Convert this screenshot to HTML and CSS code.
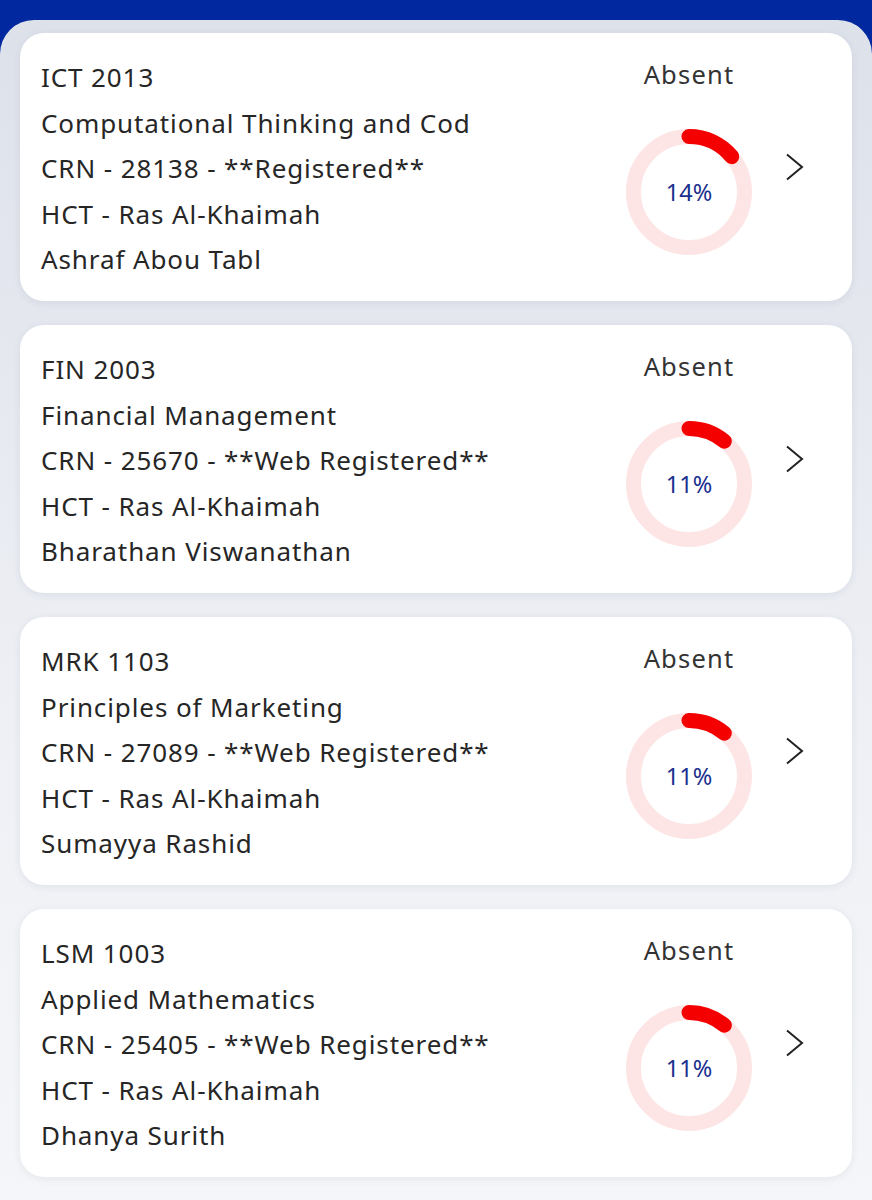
FILE: index.html
```html
<!DOCTYPE html>
<html lang="en">
<head>
    <meta charset="UTF-8">
    <meta name="viewport" content="width=device-width, initial-scale=1.0">
    <title>Attendance</title>
    <link rel="stylesheet" href="styles.css">
</head>
<body>
    <div id="wrap">
        <div class="card">
            <div class="info">
                <p>ICT 2013</p>
                <p>Computational Thinking and Cod</p>
                <p>CRN - 28138 - **Registered**</p>
                <p>HCT - Ras Al-Khaimah</p>
                <p>Ashraf Abou Tabl</p>
            </div>
            <div class="status">
                <div class="label">Absent</div>
                <div class="ring">
                    <svg viewBox="0 0 126 126" width="126" height="126">
                        <circle class="track" cx="63" cy="63" r="55.5"/>
                        <circle class="bar" cx="63" cy="63" r="55.5" pathLength="100" stroke-dasharray="14 100" transform="rotate(-90 63 63)"/>
                    </svg>
                    <span class="pct">14%</span>
                </div>
            </div>
            <svg class="arrow" viewBox="0 0 20 28" width="20" height="28"><path d="M3 1.5 L18 14 L3 26.5"/></svg>
        </div>

        <div class="card">
            <div class="info">
                <p>FIN 2003</p>
                <p>Financial Management</p>
                <p>CRN - 25670 - **Web Registered**</p>
                <p>HCT - Ras Al-Khaimah</p>
                <p>Bharathan Viswanathan</p>
            </div>
            <div class="status">
                <div class="label">Absent</div>
                <div class="ring">
                    <svg viewBox="0 0 126 126" width="126" height="126">
                        <circle class="track" cx="63" cy="63" r="55.5"/>
                        <circle class="bar" cx="63" cy="63" r="55.5" pathLength="100" stroke-dasharray="11 100" transform="rotate(-90 63 63)"/>
                    </svg>
                    <span class="pct">11%</span>
                </div>
            </div>
            <svg class="arrow" viewBox="0 0 20 28" width="20" height="28"><path d="M3 1.5 L18 14 L3 26.5"/></svg>
        </div>

        <div class="card">
            <div class="info">
                <p>MRK 1103</p>
                <p>Principles of Marketing</p>
                <p>CRN - 27089 - **Web Registered**</p>
                <p>HCT - Ras Al-Khaimah</p>
                <p>Sumayya Rashid</p>
            </div>
            <div class="status">
                <div class="label">Absent</div>
                <div class="ring">
                    <svg viewBox="0 0 126 126" width="126" height="126">
                        <circle class="track" cx="63" cy="63" r="55.5"/>
                        <circle class="bar" cx="63" cy="63" r="55.5" pathLength="100" stroke-dasharray="11 100" transform="rotate(-90 63 63)"/>
                    </svg>
                    <span class="pct">11%</span>
                </div>
            </div>
            <svg class="arrow" viewBox="0 0 20 28" width="20" height="28"><path d="M3 1.5 L18 14 L3 26.5"/></svg>
        </div>

        <div class="card">
            <div class="info">
                <p>LSM 1003</p>
                <p>Applied Mathematics</p>
                <p>CRN - 25405 - **Web Registered**</p>
                <p>HCT - Ras Al-Khaimah</p>
                <p>Dhanya Surith</p>
            </div>
            <div class="status">
                <div class="label">Absent</div>
                <div class="ring">
                    <svg viewBox="0 0 126 126" width="126" height="126">
                        <circle class="track" cx="63" cy="63" r="55.5"/>
                        <circle class="bar" cx="63" cy="63" r="55.5" pathLength="100" stroke-dasharray="11 100" transform="rotate(-90 63 63)"/>
                    </svg>
                    <span class="pct">11%</span>
                </div>
            </div>
            <svg class="arrow" viewBox="0 0 20 28" width="20" height="28"><path d="M3 1.5 L18 14 L3 26.5"/></svg>
        </div>
    </div>
</body>
</html>
```

FILE: styles.css
```css
*{
    margin: 0;
    padding: 0;
    box-sizing: border-box;
}
body{
    width: 100%;
    min-height: 100vh;
    background-color: #01289e;
    font-family: "Noto Sans", "Open Sans", sans-serif;
    color: #262626;
}
#wrap{
    margin-top: 20px;
    min-height: 1180px;
    border-radius: 34px 34px 0 0;
    background: linear-gradient(#dde1ea, #eef0f5 60%, #f5f6f9);
    padding: 13px 20px 20px;
    display: flex;
    flex-direction: column;
    gap: 24px;
}
.card{
    height: 268px;
    background-color: #fff;
    border-radius: 24px;
    box-shadow: 0 2px 8px rgba(40, 50, 80, 0.08);
    display: flex;
    align-items: center;
    padding: 22px 0 0 21px;
}
.info{
    flex: 1;
    align-self: flex-start;
}
.info p{
    font-size: 26px;
    line-height: 45.5px;
    letter-spacing: 0.9px;
    white-space: nowrap;
}
.status{
    width: 144px;
    align-self: flex-start;
    display: flex;
    flex-direction: column;
    align-items: center;
}
.label{
    font-size: 25.5px;
    line-height: 38px;
    letter-spacing: 1.2px;
    color: #333;
}
.ring{
    position: relative;
    width: 126px;
    height: 126px;
    margin-top: 36px;
}
.ring svg{
    display: block;
}
.ring circle{
    fill: none;
    stroke-width: 15;
}
.ring .track{
    stroke: #fde5e5;
}
.ring .bar{
    stroke: #f40000;
    stroke-linecap: round;
}
.pct{
    position: absolute;
    left: 0;
    top: 0;
    width: 100%;
    line-height: 126px;
    text-align: center;
    font-size: 23.5px;
    color: #1b2f8e;
}
.arrow{
    margin: 0 48px 22px 23px;
}
.arrow path{
    fill: none;
    stroke: #222;
    stroke-width: 2;
}
```
